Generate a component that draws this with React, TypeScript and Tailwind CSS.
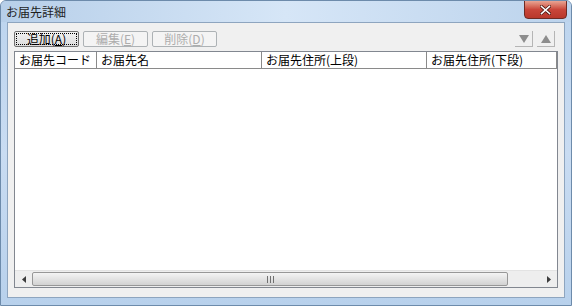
export default function App() {
  const font = { fontFamily: '"Noto Sans CJK JP", "Liberation Sans", sans-serif' };

  const columns = [
    { name: "お届先コード", width: "w-[82px]" },
    { name: "お届先名", width: "w-[165px]" },
    { name: "お届先住所(上段)", width: "w-[165px]" },
    { name: "お届先住所(下段)", width: "flex-1" },
  ];

  return (
    <div
      className="w-[572px] h-[306px] flex flex-col bg-gradient-to-b from-[#bcd4ee] via-[#c9dcf2] to-[#b8d1ec] border border-[#6d8bab] rounded-t-[6px] overflow-hidden text-[12px] text-black"
      style={font}
    >
      {/* title bar */}
      <div className="relative h-[21px] flex items-center px-[5px] bg-gradient-to-r from-[#b7cfe9] via-[#d6e6f7] to-[#bcd3ec]">
        <span className="leading-none text-[12px] text-[#1e1e1e]">お届先詳細</span>
        <div className="absolute right-[4px] top-[-1px] w-[43px] h-[19px] rounded-b-[4px] border border-[#6e2b24] bg-gradient-to-b from-[#e8a493] via-[#c9463a] to-[#b9382b] flex items-center justify-center">
          <svg width="11" height="10" viewBox="0 0 11 10">
            <path d="M1.5 1.5 L9.5 8.5 M9.5 1.5 L1.5 8.5" stroke="#4a1710" strokeWidth="3" strokeLinecap="square" />
            <path d="M1.5 1.5 L9.5 8.5 M9.5 1.5 L1.5 8.5" stroke="#ffffff" strokeWidth="1.6" strokeLinecap="square" />
          </svg>
        </div>
      </div>

      {/* client area */}
      <div className="flex-1 px-[6px] pb-[7px]">
        <div className="h-[276px] border border-[#8ea5bf] bg-[#f0f0f0] px-[6px] pt-[8px] flex flex-col">
          {/* toolbar */}
          <div className="h-[16px] flex items-center">
            <button className="w-[65px] h-[16px] border border-[#707070] rounded-[2px] bg-gradient-to-b from-[#f2f2f2] to-[#dcdcdc] flex items-center justify-center p-[1px]">
              <span className="w-full h-full border border-dotted border-black flex items-center justify-center leading-none">
                追加(<span className="underline">A</span>)
              </span>
            </button>
            <button className="ml-[4px] w-[65px] h-[16px] border border-[#adb2b5] rounded-[2px] bg-[#f4f4f4] flex items-center justify-center leading-none text-[#adadad]">
              編集(<span className="underline">E</span>)
            </button>
            <button className="ml-[4px] w-[65px] h-[16px] border border-[#adb2b5] rounded-[2px] bg-[#f4f4f4] flex items-center justify-center leading-none text-[#adadad]">
              削除(<span className="underline">D</span>)
            </button>
            <div className="ml-auto mr-[3px] flex gap-[4px]">
              <div className="w-[18px] h-[16px] border-r border-b border-[#b5b5b5] flex items-center justify-center">
                <svg width="10" height="8" viewBox="0 0 10 8">
                  <path d="M0 0 H10 L5 8 Z" fill="#8d8d8d" />
                </svg>
              </div>
              <div className="w-[18px] h-[16px] border-r border-b border-[#b5b5b5] flex items-center justify-center">
                <svg width="10" height="8" viewBox="0 0 10 8">
                  <path d="M0 8 H10 L5 0 Z" fill="#8d8d8d" />
                </svg>
              </div>
            </div>
          </div>

          {/* list */}
          <div className="mt-[4px] h-[237px] border border-[#828790] bg-white flex flex-col">
            <div className="h-[17px] flex border-b border-[#8a8a8a] bg-white">
              {columns.map((c) => (
                <div
                  key={c.name}
                  className={`${c.width} h-full border-r border-[#8a8a8a] flex items-center pl-[4px] leading-none whitespace-nowrap overflow-hidden`}
                >
                  {c.name}
                </div>
              ))}
            </div>
            <div className="flex-1 bg-white" />

            {/* horizontal scrollbar */}
            <div className="h-[17px] flex bg-[#eeeeee] border-t border-[#e3e3e3]">
              <div className="w-[17px] h-full flex items-center justify-center">
                <svg width="4" height="7" viewBox="0 0 4 7">
                  <path d="M4 0 V7 L0 3.5 Z" fill="#3c3c3c" />
                </svg>
              </div>
              <div className="w-[476px] h-full py-[1px]">
                <div className="h-full rounded-[2px] border border-[#979797] bg-gradient-to-b from-[#f4f4f4] via-[#e3e3e3] to-[#d2d2d2] flex items-center justify-center">
                  <svg width="7" height="7" viewBox="0 0 7 7">
                    <path d="M0.5 0 V7 M3.5 0 V7 M6.5 0 V7" stroke="#707070" strokeWidth="1" />
                  </svg>
                </div>
              </div>
              <div className="flex-1" />
              <div className="w-[17px] h-full flex items-center justify-center">
                <svg width="4" height="7" viewBox="0 0 4 7">
                  <path d="M0 0 V7 L4 3.5 Z" fill="#3c3c3c" />
                </svg>
              </div>
            </div>
          </div>
        </div>
      </div>
    </div>
  );
}
